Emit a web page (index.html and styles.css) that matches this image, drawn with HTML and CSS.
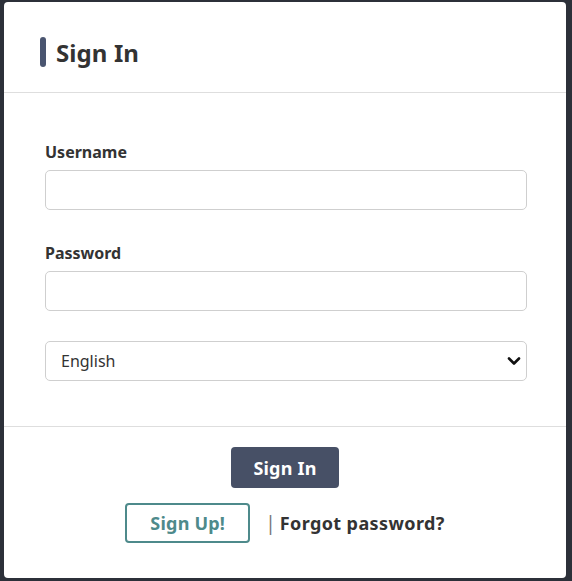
FILE: index.html
```html
<!DOCTYPE html>
<html lang="en">
<head>
<meta charset="utf-8">
<title>Sign In</title>
<link rel="stylesheet" href="styles.css">
</head>
<body>
<div class="card">
  <div class="card-header">
    <span class="accent"></span>
    <h1 class="title">Sign In</h1>
  </div>
  <div class="card-body">
    <label class="label" for="username">Username</label>
    <input class="field" id="username" type="text">
    <label class="label label-gap" for="password">Password</label>
    <input class="field" id="password" type="password">
    <div class="select-wrap">
      <select class="field select">
        <option>English</option>
      </select>
      <svg class="chevron" width="14" height="10" viewBox="0 0 14 10"><path d="M2 2.5 L7 7.5 L12 2.5" fill="none" stroke="#111" stroke-width="2.6" stroke-linecap="round" stroke-linejoin="round"/></svg>
    </div>
  </div>
  <div class="card-footer">
    <button class="btn btn-primary" type="button">Sign In</button>
    <div class="links">
      <button class="btn btn-outline" type="button">Sign Up!</button>
      <span class="sep">|</span>
      <a class="forgot" href="#">Forgot password?</a>
    </div>
  </div>
</div>
</body>
</html>
```

FILE: styles.css
```css
html, body {
  margin: 0;
  height: 100%;
}
body {
  background: #2c3039;
  padding: 2px 6px 3px 4px;
  box-sizing: border-box;
  font-family: "Noto Sans", "Open Sans", sans-serif;
  color: #333;
}
.card {
  background: #fff;
  border-radius: 4px;
  height: 576px;
  display: flex;
  flex-direction: column;
}
.card-header {
  display: flex;
  align-items: center;
  gap: 10px;
  padding: 35px 0 25px 36px;
  border-bottom: 1px solid #dedede;
}
.accent {
  display: block;
  width: 6px;
  height: 30px;
  border-radius: 3px;
  background: #4a5570;
}
.title {
  margin: 0;
  font-size: 24px;
  font-weight: 700;
  line-height: 30px;
  letter-spacing: 0.1px;
  color: #333;
  position: relative;
  top: 1px;
}
.card-body {
  display: flex;
  flex-direction: column;
  padding: 48px 39px 45px 41px;
  border-bottom: 1px solid #dedede;
}
.label {
  display: block;
  font-size: 16px;
  font-weight: 700;
  line-height: 22px;
  margin-bottom: 7px;
  color: #333;
}
.label-gap {
  margin-top: 32px;
}
.field {
  box-sizing: border-box;
  width: 100%;
  height: 40px;
  border: 1px solid #cfcfcf;
  border-radius: 5px;
  background: #fff;
  font-family: inherit;
  font-size: 16px;
  color: #333;
  padding: 0 15px;
  margin: 0;
}
.select-wrap {
  position: relative;
  margin-top: 30px;
}
.select {
  appearance: none;
  -webkit-appearance: none;
  display: block;
}
.chevron {
  position: absolute;
  right: 6px;
  top: 15px;
}
.card-footer {
  display: flex;
  flex-direction: column;
  align-items: center;
  padding-top: 20px;
  gap: 15px;
}
.btn {
  font-family: inherit;
  font-size: 18px;
  font-weight: 700;
  letter-spacing: 0.2px;
  border-radius: 4px;
  cursor: pointer;
  box-sizing: border-box;
  padding: 0;
}
.btn-primary {
  background: #475066;
  color: #fff;
  border: none;
  width: 108px;
  height: 41px;
}
.links {
  display: flex;
  align-items: center;
}
.btn-outline {
  background: #fff;
  color: #4e8a8b;
  border: 2px solid #4e8a8b;
  width: 125px;
  height: 40px;
}
.sep {
  margin-left: 15px;
  margin-right: 4px;
  color: #777;
  font-size: 19px;
  font-weight: 400;
}
.forgot {
  color: #333;
  font-weight: 700;
  font-size: 18px;
  letter-spacing: 0.4px;
  text-decoration: none;
}
```
